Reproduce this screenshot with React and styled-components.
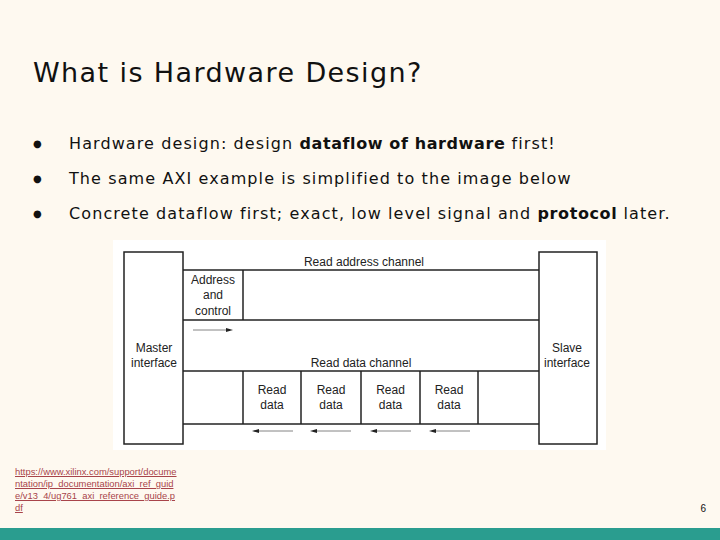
import React from "react";
import styled, { createGlobalStyle } from "styled-components";

const Global = createGlobalStyle`
  html, body { margin: 0; padding: 0; }
  body { font-family: "DejaVu Sans", Verdana, sans-serif; }
`;

const Slide = styled.div`
  width: 720px;
  height: 540px;
  background: #fef9f0;
  display: flex;
  flex-direction: column;
  overflow: hidden;
`;

const Body = styled.div`
  flex: 1;
  display: flex;
  flex-direction: column;
  padding: 57px 0 0 33px;
`;

const Title = styled.h1`
  margin: 0;
  font-weight: normal;
  font-size: 27px;
  color: #111;
  letter-spacing: 1.4px;
`;

const List = styled.ul`
  list-style: none;
  margin: 44px 0 0;
  padding: 0;
  display: flex;
  flex-direction: column;
  gap: 13px;
`;

const Item = styled.li`
  display: flex;
  align-items: center;
  height: 22px;
  font-size: 16px;
  color: #111;
  letter-spacing: 1.1px;
  &::before {
    content: "●";
    font-size: 10px;
    width: 36px;
    letter-spacing: 0;
  }
  b { font-weight: bold; letter-spacing: 0.6px; }
`;

const Figure = styled.div`
  margin: 16px 0 0 80px;
  width: 493px;
  height: 210px;
  background: #fff;
`;

const Footer = styled.div`
  display: flex;
  justify-content: space-between;
  align-items: flex-end;
  padding: 0 14px 14px 15px;
`;

const Link = styled.a`
  width: 162px;
  font-family: "Liberation Sans", Arial, sans-serif;
  font-size: 9.4px;
  line-height: 12px;
  color: #a8444a;
  text-decoration: underline;
  word-break: break-all;
`;

const PageNum = styled.span`
  font-family: "Liberation Sans", Arial, sans-serif;
  font-size: 10px;
  color: #111;
`;

const Bar = styled.div`
  height: 12px;
  background: #2a9d8f;
`;

const T = ({ x, y, children }) => (
  <text x={x} y={y} textAnchor="middle" fontSize="12" fill="#222" fontFamily="Liberation Sans, Arial, sans-serif">
    {children}
  </text>
);

const Diagram = () => {
  const ox = 113, oy = 243;
  const X = (v) => v - ox, Y = (v) => v - oy;
  const cells = [243, 301, 361, 420, 478];
  return (
    <svg width="493" height="210" viewBox="0 0 493 210">
      <g stroke="#222" strokeWidth="1.5" fill="none">
        <rect x={X(124)} y={Y(255)} width="59" height="192" />
        <rect x={X(539)} y={Y(255)} width="58" height="192" />
        {[273, 323, 374, 427].map((y) => (
          <line key={y} x1={X(183)} x2={X(539)} y1={Y(y)} y2={Y(y)} />
        ))}
        <line x1={X(243)} x2={X(243)} y1={Y(273)} y2={Y(323)} />
        {cells.map((x) => (
          <line key={x} x1={X(x)} x2={X(x)} y1={Y(374)} y2={Y(427)} />
        ))}
      </g>
      <g stroke="#666" strokeWidth="0.8">
        <line x1={X(193)} x2={X(230)} y1={Y(333)} y2={Y(333)} />
        {cells.slice(0, 4).map((x) => (
          <line key={x} x1={X(x + 12)} x2={X(x + 50)} y1={Y(434)} y2={Y(434)} />
        ))}
      </g>
      <g fill="#222">
        <polygon points={`${X(233)},${Y(333)} ${X(226)},${Y(331)} ${X(226)},${Y(335)}`} />
        {cells.slice(0, 4).map((x) => (
          <polygon key={x} points={`${X(x + 9)},${Y(434)} ${X(x + 16)},${Y(432)} ${X(x + 16)},${Y(436)}`} />
        ))}
      </g>
      <T x={X(364)} y={Y(269)}>Read address channel</T>
      <T x={X(213)} y={Y(287)}>Address</T>
      <T x={X(213)} y={Y(302)}>and</T>
      <T x={X(213)} y={Y(318)}>control</T>
      <T x={X(154)} y={Y(355)}>Master</T>
      <T x={X(154)} y={Y(370)}>interface</T>
      <T x={X(567)} y={Y(355)}>Slave</T>
      <T x={X(567)} y={Y(370)}>interface</T>
      <T x={X(361)} y={Y(370)}>Read data channel</T>
      {cells.slice(0, 4).map((x, i) => (
        <g key={x}>
          <T x={X((x + cells[i + 1]) / 2)} y={Y(397)}>Read</T>
          <T x={X((x + cells[i + 1]) / 2)} y={Y(412)}>data</T>
        </g>
      ))}
    </svg>
  );
};

export default function App() {
  return (
    <>
      <Global />
      <Slide>
        <Body>
          <Title>What is Hardware Design?</Title>
          <List>
            <Item>
              <span>
                Hardware design: design <b>dataflow of hardware</b> first!
              </span>
            </Item>
            <Item>
              <span>The same AXI example is simplified to the image below</span>
            </Item>
            <Item>
              <span>
                Concrete dataflow first; exact, low level signal and <b>protocol</b> later.
              </span>
            </Item>
          </List>
          <Figure>
            <Diagram />
          </Figure>
        </Body>
        <Footer>
          <Link href="#">
            https://www.xilinx.com/support/documentation/ip_documentation/axi_ref_guide/v13_4/ug761_axi_reference_guide.pdf
          </Link>
          <PageNum>6</PageNum>
        </Footer>
        <Bar />
      </Slide>
    </>
  );
}
